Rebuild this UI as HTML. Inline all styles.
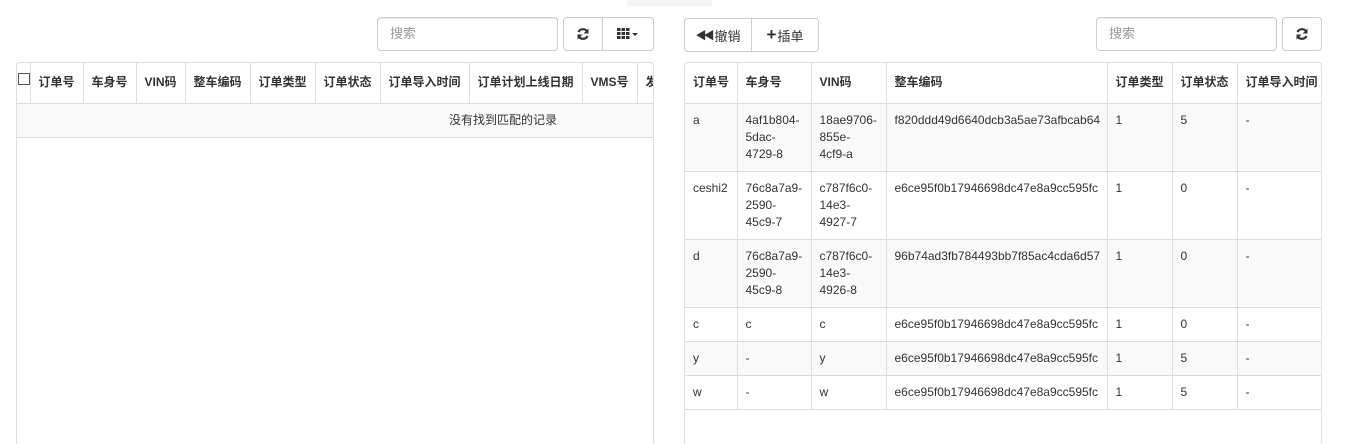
<!DOCTYPE html>
<html><head><meta charset="utf-8"><style>
*{box-sizing:border-box;margin:0;padding:0}
html,body{width:1349px;height:444px;overflow:hidden}
body{background:#fff;font-family:"Liberation Sans","Noto Sans CJK SC",sans-serif;font-size:12px;color:#333;position:relative}
.abs{position:absolute}
.inp{border:1px solid #ccc;border-radius:4px;height:34px;padding:0 12px;line-height:32px;color:#999;font-size:13px;box-shadow:inset 0 1px 1px rgba(0,0,0,.075)}
.btn{border:1px solid #ccc;height:34px;background:#fff;display:flex;align-items:center;justify-content:center;font-size:13px;color:#333}
.box{border:1px solid #ddd;border-bottom:none;border-radius:4px 4px 0 0;overflow:hidden}
table{border-collapse:collapse;table-layout:fixed}
td,th{border:1px solid #ddd;padding:8px;line-height:17px;vertical-align:top;text-align:left;white-space:nowrap;overflow:hidden}
th{font-weight:bold;height:40px;padding:0 8px;vertical-align:middle;border-top:none}
tr td:first-child,tr th:first-child{border-left:none}
tr td:last-child,tr th:last-child{border-right:none}
.s td{background:#f9f9f9}
</style></head><body>
<div class="abs" style="left:627px;top:0;width:85px;height:6px;background:#f5f5f5"></div>

<div class="abs inp" style="left:377px;top:17px;width:181px">搜索</div>
<div class="abs btn" style="left:563px;top:17px;width:40px;border-radius:4px 0 0 4px"><svg width="14" height="14" viewBox="0 0 14 14"><path d="M11.5 5A5 5 0 0 0 2.5 5" fill="none" stroke="#333" stroke-width="2.2"/><path d="M12.5 1.5v5h-5z" fill="#333"/><path d="M2.5 9A5 5 0 0 0 11.5 9" fill="none" stroke="#333" stroke-width="2.2"/><path d="M1.5 12.5v-5h5z" fill="#333"/></svg></div>
<div class="abs btn" style="left:602px;top:17px;width:52px;border-radius:0 4px 4px 0"><svg width="22" height="12" viewBox="0 0 22 12"><g fill="#333"><rect x="0" y="0" width="3.5" height="3"/><rect x="4.5" y="0" width="3.5" height="3"/><rect x="9" y="0" width="3.5" height="3"/><rect x="0" y="4" width="3.5" height="3"/><rect x="4.5" y="4" width="3.5" height="3"/><rect x="9" y="4" width="3.5" height="3"/><rect x="0" y="8" width="3.5" height="3"/><rect x="4.5" y="8" width="3.5" height="3"/><rect x="9" y="8" width="3.5" height="3"/><path d="M15 5h6l-3 3z"/></g></svg></div>

<div class="abs btn" style="left:684px;top:18px;width:68px;border-radius:4px 0 0 4px"><span style="font-size:11px;letter-spacing:-3px;margin-right:3px">◀◀</span>撤销</div>
<div class="abs btn" style="left:751px;top:18px;width:68px;border-radius:0 4px 4px 0"><b style="font-size:17px;margin-right:1px">+</b>插单</div>

<div class="abs inp" style="left:1096px;top:17px;width:181px">搜索</div>
<div class="abs btn" style="left:1282px;top:17px;width:40px;border-radius:4px"><svg width="14" height="14" viewBox="0 0 14 14"><path d="M11.5 5A5 5 0 0 0 2.5 5" fill="none" stroke="#333" stroke-width="2.2"/><path d="M12.5 1.5v5h-5z" fill="#333"/><path d="M2.5 9A5 5 0 0 0 11.5 9" fill="none" stroke="#333" stroke-width="2.2"/><path d="M1.5 12.5v-5h5z" fill="#333"/></svg></div>

<div class="abs box" style="left:16px;top:62px;width:638px;height:382px">
<table style="width:700px">
<colgroup><col style="width:13px"><col style="width:53px"><col style="width:53px"><col style="width:49px"><col style="width:65px"><col style="width:65px"><col style="width:65px"><col style="width:89px"><col style="width:113px"><col style="width:55px"><col style="width:80px"></colgroup>
<tr><th style="padding:0 1px"><div style="width:12px;height:12px;border:1px solid #555;margin-top:-8px"></div></th><th>订单号</th><th>车身号</th><th>VIN码</th><th>整车编码</th><th>订单类型</th><th>订单状态</th><th>订单导入时间</th><th>订单计划上线日期</th><th>VMS号</th><th>发</th></tr>
<tr class="s"><td colspan="11" style="text-align:left;padding-left:432px;height:34px;border-right:none">没有找到匹配的记录</td></tr>
</table>
</div>

<div class="abs box" style="left:684px;top:62px;width:638px;height:382px">
<table style="width:637px">
<colgroup><col style="width:52px"><col style="width:74px"><col style="width:75px"><col style="width:221px"><col style="width:65px"><col style="width:65px"><col style="width:85px"></colgroup>
<tr><th>订单号</th><th>车身号</th><th>VIN码</th><th>整车编码</th><th>订单类型</th><th>订单状态</th><th>订单导入时间</th></tr>
<tr class="s"><td>a</td><td>4af1b804-<br>5dac-<br>4729-8</td><td>18ae9706-<br>855e-<br>4cf9-a</td><td>f820ddd49d6640dcb3a5ae73afbcab64</td><td>1</td><td>5</td><td>-</td></tr>
<tr><td>ceshi2</td><td>76c8a7a9-<br>2590-<br>45c9-7</td><td>c787f6c0-<br>14e3-<br>4927-7</td><td>e6ce95f0b17946698dc47e8a9cc595fc</td><td>1</td><td>0</td><td>-</td></tr>
<tr class="s"><td>d</td><td>76c8a7a9-<br>2590-<br>45c9-8</td><td>c787f6c0-<br>14e3-<br>4926-8</td><td>96b74ad3fb784493bb7f85ac4cda6d57</td><td>1</td><td>0</td><td>-</td></tr>
<tr><td>c</td><td>c</td><td>c</td><td>e6ce95f0b17946698dc47e8a9cc595fc</td><td>1</td><td>0</td><td>-</td></tr>
<tr class="s"><td>y</td><td>-</td><td>y</td><td>e6ce95f0b17946698dc47e8a9cc595fc</td><td>1</td><td>5</td><td>-</td></tr>
<tr><td>w</td><td>-</td><td>w</td><td>e6ce95f0b17946698dc47e8a9cc595fc</td><td>1</td><td>5</td><td>-</td></tr>
</table>
</div>
</body></html>
